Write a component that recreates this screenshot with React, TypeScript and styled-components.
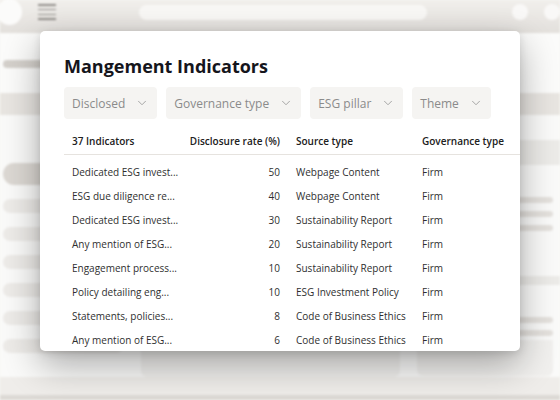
import React from "react";
import styled, { createGlobalStyle } from "styled-components";
import { ChevronDown } from "lucide-react";

const GlobalStyle = createGlobalStyle`
  html, body {
    margin: 0;
    padding: 0;
  }
  body {
    font-family: "Open Sans", "Noto Sans", sans-serif;
    -webkit-font-smoothing: antialiased;
  }
  * {
    box-sizing: border-box;
  }
`;

const Page = styled.div`
  position: relative;
  width: 560px;
  height: 400px;
  overflow: hidden;
  background: #f6f5f3;
`;

/* blurred app behind the dialog */
const Backdrop = styled.div`
  display: flex;
  flex-direction: column;
  height: 400px;
  filter: blur(1.2px);
`;

const TopBar = styled.div`
  display: flex;
  align-items: center;
  height: 33px;
  padding-bottom: 9px;
  background: linear-gradient(180deg, #f1efec 0%, #e3e0dc 100%);
`;

const Avatar = styled.div`
  width: 26px;
  height: 26px;
  margin-left: -3px;
  border-radius: 50%;
  background: #fbfbfa;
`;

const Hamburger = styled.div`
  display: flex;
  flex-direction: column;
  gap: 3.4px;
  width: 18px;
  margin-left: 16px;

  span {
    display: block;
    height: 1.3px;
    background: #8f8c88;
  }
`;

const SearchPill = styled.div`
  width: 296px;
  height: 15px;
  margin-left: 83px;
  border-radius: 8px;
  background: #f8f7f5;
`;

const Dot = styled.div<{ $ml: number }>`
  width: 16px;
  height: 16px;
  margin-left: ${(p) => p.$ml}px;
  border-radius: 50%;
  background: #f9f8f7;
  flex-shrink: 0;
`;

const SubHeader = styled.div`
  height: 60px;
  padding: 27px 0 0 3px;
  background: #fbfbfa;
`;

const TitleSkeleton = styled.div`
  width: 100px;
  height: 8px;
  border-radius: 4px;
  background: #d4d0cb;
`;

const Band = styled.div`
  height: 22px;
  background: #e8e5e1;
`;

const Body = styled.div`
  flex: 1;
  display: grid;
  grid-template-columns: 130px 1fr;
  background: #fafaf9;
`;

const Sidebar = styled.div`
  display: flex;
  flex-direction: column;
  gap: 14px;
  padding: 48px 0 0 3px;
`;

const SidePill = styled.div<{ $active?: boolean }>`
  width: 120px;
  height: ${(p) => (p.$active ? 22 : 14)}px;
  border-radius: 11px;
  background: ${(p) => (p.$active ? "#dcd8d3" : "#edebe8")};
`;

const Main = styled.div`
  display: grid;
  grid-template-columns: 1fr 136px;
  gap: 17px;
  padding: 0 7px 0 11px;
`;

const MainCol = styled.div`
  display: flex;
  flex-direction: column;
  justify-content: flex-end;
`;

const SideCol = styled.div`
  display: flex;
  flex-direction: column;
`;

const ColCard = styled.div<{ $mt?: number; $h?: number }>`
  height: ${(p) => p.$h ?? 40}px;
  margin-top: ${(p) => p.$mt ?? 0}px;
  border-radius: 0 0 6px 6px;
  background: #f1f0ee;
`;

const SoftBand = styled.div<{ $h: number; $mt: number }>`
  height: ${(p) => p.$h}px;
  margin-top: ${(p) => p.$mt}px;
  margin-right: -7px;
  background: #ecebe8;
`;

const Line = styled.div<{ $mt: number }>`
  height: 6px;
  margin-top: ${(p) => p.$mt}px;
  border-radius: 3px;
  background: #e4e1dd;
`;

const Footer = styled.div`
  height: 23px;
  border-bottom: 5px solid #dcd9d5;
  background: #efedea;
`;

/* dialog */
const Dialog = styled.div`
  position: absolute;
  left: 40px;
  top: 31px;
  width: 480px;
  height: 320px;
  padding: 23px 0 0 24px;
  border-radius: 5px;
  background: #ffffff;
  overflow: hidden;
  box-shadow: 0 14px 36px rgba(0, 0, 0, 0.32), 0 2px 8px rgba(0, 0, 0, 0.12);
`;

const Title = styled.h2`
  margin: 0;
  font-size: 18px;
  line-height: 24px;
  font-weight: 700;
  color: #15151c;
`;

const Filters = styled.div`
  display: flex;
  gap: 9px;
  margin-top: 9px;
`;

const FilterButton = styled.button`
  display: flex;
  align-items: center;
  gap: 10px;
  height: 32px;
  padding: 0 8px 0 8px;
  border: none;
  border-radius: 4px;
  background: #f5f4f2;
  font-family: inherit;
  font-size: 12px;
  color: #8b8b8b;

  svg {
    color: #9a9a9a;
  }
`;

const Table = styled.div`
  margin-top: 9px;
`;

const Row = styled.div<{ $head?: boolean }>`
  display: grid;
  grid-template-columns: 116px 108px 126px 1fr;
  align-items: center;
  height: ${(p) => (p.$head ? 27 : 24)}px;
  font-size: 10px;
  font-weight: ${(p) => (p.$head ? 600 : 400)};
  color: ${(p) => (p.$head ? "#202020" : "#2f2f2f")};
  border-bottom: ${(p) => (p.$head ? "1px solid #e6e3df" : "none")};
  white-space: nowrap;
`;

const Cell = styled.div<{ $right?: boolean }>`
  padding: 0 8px;
  text-align: ${(p) => (p.$right ? "right" : "left")};
  overflow: hidden;
`;

const Rows = styled.div`
  padding-top: 5px;
`;

const filters = ["Disclosed", "Governance type", "ESG pillar", "Theme"];

const indicators = [
  { name: "Dedicated ESG invest...", rate: 50, source: "Webpage Content" },
  { name: "ESG due diligence re...", rate: 40, source: "Webpage Content" },
  { name: "Dedicated ESG invest...", rate: 30, source: "Sustainability Report" },
  { name: "Any mention of ESG...", rate: 20, source: "Sustainability Report" },
  { name: "Engagement process...", rate: 10, source: "Sustainability Report" },
  { name: "Policy detailing eng...", rate: 10, source: "ESG Investment Policy" },
  { name: "Statements, policies...", rate: 8, source: "Code of Business Ethics" },
  { name: "Any mention of ESG...", rate: 6, source: "Code of Business Ethics" },
];

function App() {
  return (
    <>
      <GlobalStyle />
      <Page>
        <Backdrop>
          <TopBar>
            <Avatar />
            <Hamburger>
              <span />
              <span />
              <span />
              <span />
            </Hamburger>
            <SearchPill />
            <Dot $ml={85} />
            <Dot $ml={16} />
          </TopBar>
          <SubHeader>
            <TitleSkeleton />
          </SubHeader>
          <Band />
          <Body>
            <Sidebar>
              <SidePill $active />
              <SidePill />
              <SidePill />
              <SidePill />
              <SidePill />
              <SidePill />
              <SidePill />
            </Sidebar>
            <Main>
              <MainCol>
                <ColCard />
              </MainCol>
              <SideCol>
                <SoftBand $h={25} $mt={25} />
                <Line $mt={32} />
                <Line $mt={8} />
                <Line $mt={8} />
                <SoftBand $h={9} $mt={45} />
                <Line $mt={32} />
                <Line $mt={7} />
                <ColCard $mt={4} $h={36} />
              </SideCol>
            </Main>
          </Body>
          <Footer />
        </Backdrop>

        <Dialog>
          <Title>Mangement Indicators</Title>
          <Filters>
            {filters.map((f) => (
              <FilterButton key={f}>
                {f}
                <ChevronDown size={14} strokeWidth={1.5} />
              </FilterButton>
            ))}
          </Filters>
          <Table>
            <Row $head>
              <Cell>37 Indicators</Cell>
              <Cell $right>Disclosure rate (%)</Cell>
              <Cell>Source type</Cell>
              <Cell>Governance type</Cell>
            </Row>
            <Rows>
              {indicators.map((item, i) => (
                <Row key={i}>
                  <Cell>{item.name}</Cell>
                  <Cell $right>{item.rate}</Cell>
                  <Cell>{item.source}</Cell>
                  <Cell>Firm</Cell>
                </Row>
              ))}
            </Rows>
          </Table>
        </Dialog>
      </Page>
    </>
  );
}

export default App;
